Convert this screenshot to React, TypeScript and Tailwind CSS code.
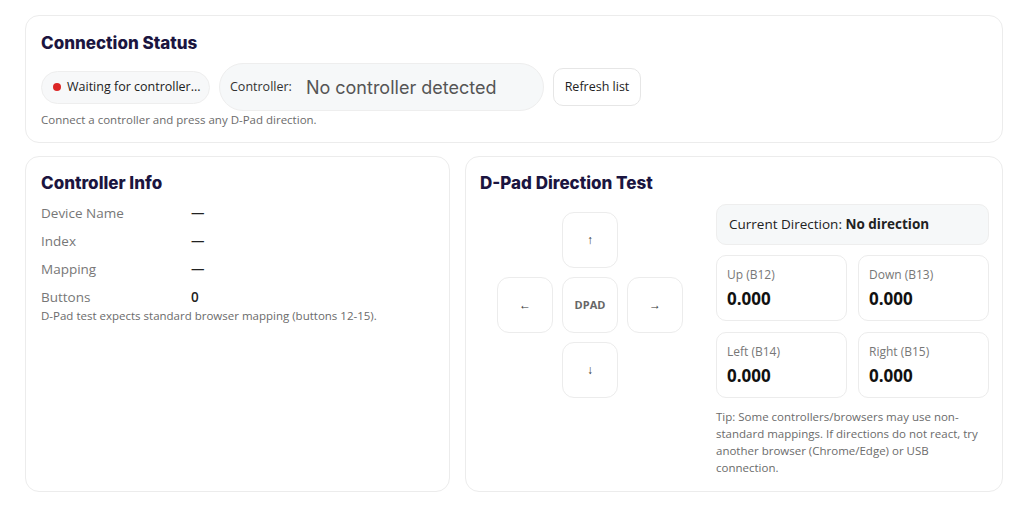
const body = { fontFamily: '"Open Sans", "Noto Sans", sans-serif' };
const head = { fontFamily: 'Inter, "Noto Sans", sans-serif' };

const Card = ({ className = '', children }: { className?: string; children: React.ReactNode }) => (
	<div className={`rounded-[14px] border border-[#ececec] bg-white ${className}`}>{children}</div>
);

const Title = ({ children }: { children: React.ReactNode }) => (
	<h2 style={head} className="text-[17px] font-extrabold leading-[22px] text-[#1b1540]">
		{children}
	</h2>
);

const info = [
	['Device Name', '—'],
	['Index', '—'],
	['Mapping', '—'],
	['Buttons', '0'],
];

const axes = [
	['Up (B12)', '0.000'],
	['Down (B13)', '0.000'],
	['Left (B14)', '0.000'],
	['Right (B15)', '0.000'],
];

const Key = ({ label, bold }: { label: string; bold?: boolean }) => (
	<div
		className={`flex h-[56px] w-[56px] items-center justify-center rounded-[12px] border border-[#ececec] bg-white ${
			bold ? 'text-[11px] font-bold text-[#666]' : 'text-[12px] text-[#333]'
		}`}>
		{label}
	</div>
);

export default function App() {
	return (
		<div style={body} className="min-h-[512px] w-[1024px] bg-white pl-[25px] pr-[21px] pt-[15px] text-[#222]">
			<Card className="px-[15px] pb-[13px] pt-[16px]">
				<Title>Connection Status</Title>
				<div className="mt-[9px] flex items-center gap-[9px]">
					<div className="flex h-[33px] w-[169px] items-center gap-[6px] rounded-full border border-[#eeeeee] bg-[#f7f8f9] pl-[11px] text-[12.5px]">
						<span className="h-[8px] w-[8px] rounded-full bg-[#dc2626]" />
						<span>Waiting for controller...</span>
					</div>
					<div className="flex h-[48px] w-[325px] items-center rounded-full border border-[#eeeeee] bg-[#f6f8f9] px-[10px]">
						<span className="text-[12.5px] text-[#333]">Controller:</span>
						<span style={head} className="ml-[14px] text-[18px] text-[#555]">
							No controller detected
						</span>
					</div>
					<button className="h-[38px] w-[88px] rounded-[10px] border border-[#e6e6e6] bg-white text-[12.5px] text-[#222]">
						Refresh list
					</button>
				</div>
				<p className="text-[11.5px] leading-[18px] text-[#6b6b6b]">
					Connect a controller and press any D-Pad direction.
				</p>
			</Card>

			<div className="mt-[13px] flex gap-[15px]">
				<Card className="h-[336px] w-[425px] px-[15px] pt-[15px]">
					<Title>Controller Info</Title>
					<div className="mt-[5px] flex flex-col">
						{info.map(([k, v]) => (
							<div key={k} className="flex h-[28px] items-center text-[13.5px]">
								<span className="w-[150px] text-[#777]">{k}</span>
								<span className="font-semibold text-[#222]">{v}</span>
							</div>
						))}
					</div>
					<p className="-mt-[4px] text-[11.5px] leading-[18px] text-[#6b6b6b]">
						D-Pad test expects standard browser mapping (buttons 12-15).
					</p>
				</Card>

				<Card className="h-[336px] flex-1 pl-[14px] pr-[13px] pt-[15px]">
					<Title>D-Pad Direction Test</Title>
					<div className="mt-[10px] flex gap-[16px]">
						<div className="flex flex-1 justify-center pt-[8px]">
							<div className="grid grid-cols-[56px_56px_56px] grid-rows-[56px_56px_56px] gap-[9px]">
								<div />
								<Key label="↑" />
								<div />
								<Key label="←" />
								<Key label="DPAD" bold />
								<Key label="→" />
								<div />
								<Key label="↓" />
								<div />
							</div>
						</div>
						<div className="w-[273px]">
							<div className="flex h-[41px] items-center rounded-[10px] border border-[#eeeeee] bg-[#f6f8f9] px-[12px] text-[13.5px] text-[#222]">
								Current Direction:&nbsp;<b>No direction</b>
							</div>
							<div className="mt-[10px] grid grid-cols-2 gap-x-[11px] gap-y-[11px]">
								{axes.map(([k, v]) => (
									<div key={k} className="h-[66px] rounded-[10px] border border-[#ececec] bg-white px-[10px] pt-[10px]">
										<div className="text-[12px] text-[#777]">{k}</div>
										<div className="mt-[2px] text-[17px] font-bold text-[#111]">{v}</div>
									</div>
								))}
							</div>
							<p className="mt-[10px] text-[11.5px] leading-[17px] text-[#6b6b6b]">
								Tip: Some controllers/browsers may use non-standard mappings. If directions do not react, try another
								browser (Chrome/Edge) or USB connection.
							</p>
						</div>
					</div>
				</Card>
			</div>
		</div>
	);
}
